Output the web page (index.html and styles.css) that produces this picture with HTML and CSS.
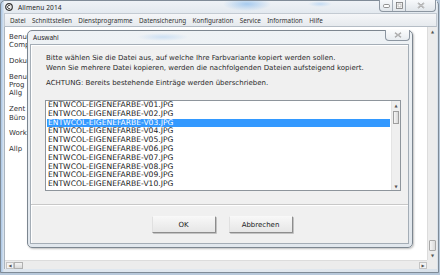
FILE: index.html
```html
<!DOCTYPE html>
<html lang="de">

<head>
    <meta charset="UTF-8">
    <title>Allmenu 2014</title>
    <link rel="stylesheet" href="styles.css">
</head>

<body>
    <div class="window">
        <div class="titlebar">
            <svg class="app-icon" width="8" height="8" viewBox="0 0 8 8">
                <circle cx="4" cy="4" r="3.3" fill="#fff" stroke="#333" stroke-width="1.2"/>
                <path d="M5.3 2.9 A1.6 1.6 0 1 0 5.3 5.1" fill="none" stroke="#333" stroke-width="0.9"/>
            </svg>
            <span class="title">Allmenu 2014</span>
            <div class="controls">
                <span class="ctl">
                    <svg width="7" height="4" viewBox="0 0 7 4"><rect x="0.5" y="0.5" width="6" height="3" rx="1.2" fill="#fff" stroke="#777" stroke-width="0.8"/></svg>
                </span>
                <span class="ctl">
                    <svg width="7" height="7" viewBox="0 0 7 7"><rect x="0.5" y="0.5" width="6" height="6" fill="#fff" stroke="#777" stroke-width="0.8"/><rect x="2" y="2" width="3" height="3" fill="none" stroke="#999" stroke-width="0.6"/></svg>
                </span>
                <span class="ctl ctl-close">
                    <svg width="8" height="7" viewBox="0 0 8 7"><path d="M1 1 L7 6 M7 1 L1 6" stroke="#888" stroke-width="1.4"/><path d="M1 1 L7 6 M7 1 L1 6" stroke="#fff" stroke-width="0.5"/></svg>
                </span>
            </div>
        </div>

        <div class="menubar">
            <span>Datei</span>
            <span>Schnittstellen</span>
            <span>Dienstprogramme</span>
            <span>Datensicherung</span>
            <span>Konfiguration</span>
            <span>Service</span>
            <span>Information</span>
            <span>Hilfe</span>
        </div>

        <div class="client">
            <!-- only the start of each label shows beside the dialog -->
            <div class="pane">
                <div class="group"><div>Benu</div><div>Comp</div></div>
                <div class="group"><div>Doku</div></div>
                <div class="group"><div>Benu</div><div>Prog</div><div>Allg</div></div>
                <div class="group"><div>Zent</div><div>Büro</div></div>
                <div class="group"><div>Work</div></div>
                <div class="group"><div>Allp</div></div>
            </div>
            <div class="vscroll">
                <span class="arrow">&#9650;</span>
                <span class="track"></span>
                <span class="thumb"></span>
                <span class="arrow">&#9660;</span>
            </div>
            <div class="hscroll">
                <span class="arrow">&#9664;</span>
                <span class="thumb"></span>
                <span class="track"></span>
                <span class="arrow">&#9654;</span>
            </div>
            <div class="grip"></div>
        </div>

        <!-- dialog window on top of the main window -->
        <div class="dialog">
            <div class="dialog-title">Auswahl</div>
            <span class="dialog-close">
                <svg width="8" height="6" viewBox="0 0 8 6"><path d="M1 0.8 L7 5.2 M7 0.8 L1 5.2" stroke="#888" stroke-width="1.3"/><path d="M1 0.8 L7 5.2 M7 0.8 L1 5.2" stroke="#fff" stroke-width="0.4"/></svg>
            </span>
            <div class="panel">
                <p class="message">Bitte wählen Sie die Datei aus, auf welche Ihre Farbvariante kopiert werden sollen.<br>Wenn Sie mehrere Datei kopieren, werden die nachfolgenden Dateien aufsteigend kopiert.</p>
                <p class="message warn">ACHTUNG: Bereits bestehende Einträge werden überschrieben.</p>
                <div class="listbox">
                    <div class="items" id="items"></div>
                    <div class="lscroll">
                        <span class="arrow">&#9650;</span>
                        <span class="thumb"></span>
                        <span class="track"></span>
                        <span class="arrow">&#9660;</span>
                    </div>
                </div>
                <div class="footer">
                    <button>OK</button>
                    <button>Abbrechen</button>
                </div>
            </div>
        </div>
    </div>

    <script>
        const items = document.getElementById('items');
        for (let i = 1; i <= 10; i++) {
            const row = document.createElement('div');
            row.className = 'item' + (i === 3 ? ' selected' : '');
            row.textContent = 'ENTWCOL-EIGENEFARBE-V' + String(i).padStart(2, '0') + '.JPG';
            items.appendChild(row);
        }
    </script>
</body>

</html>
```

FILE: styles.css
```css
* {
    box-sizing: border-box;
}

body {
    margin: 0;
    width: 440px;
    height: 275px;
    overflow: hidden;
    background: #b7c8da;
    font-family: "DejaVu Sans", Verdana, sans-serif;
}

.window {
    position: relative;
    width: 439px;
    height: 273px;
    display: flex;
    flex-direction: column;
    padding: 0 1px 3px 3px;
    border: 1px solid #7f8b97;
    border-radius: 5px 5px 0 0;
    background: linear-gradient(90deg, #a9c6e6 0, #dde6ef 3px, #e3e9ef 60%, #d9e2eb 100%);
}

.titlebar {
    position: relative;
    height: 12px;
    display: flex;
    align-items: center;
    background: radial-gradient(ellipse 24px 7px at 243px 3px, #a7cbef, rgba(167, 203, 239, 0)),
        radial-gradient(ellipse 12px 3px at 316px 3px, #c3dbf3, rgba(195, 219, 243, 0)),
        linear-gradient(#eef2f6, #e3e9ef);
}

.app-icon {
    margin-left: 1px;
}

.title {
    margin-left: 5px;
    font-family: "Noto Sans", sans-serif;
    font-size: 6.6px;
    color: #1e1e1e;
    letter-spacing: 0.1px;
}

.controls {
    position: absolute;
    top: -1px;
    right: 1px;
    display: flex;
    height: 12px;
    border: 1px solid #8c96a1;
    border-top: none;
    border-radius: 0 0 4px 4px;
    overflow: hidden;
    background: linear-gradient(#f7f9fb, #e1e6eb);
}

.ctl {
    width: 13px;
    display: flex;
    align-items: center;
    justify-content: center;
    border-right: 1px solid #a3acb6;
}

.ctl-close {
    width: 29px;
    border-right: none;
}

.menubar {
    height: 14px;
    display: flex;
    align-items: center;
    padding-left: 1.8px;
    background: linear-gradient(#f5f6f8, #e6eaee);
    border: 1px solid #c3cad2;
    border-bottom-color: #b5bdc6;
    font-family: "Noto Sans", sans-serif;
    font-size: 6.3px;
    color: #333;
}

.menubar span {
    padding: 0 3.2px;
}

.client {
    flex: 1;
    display: grid;
    grid-template-columns: 1fr 10px;
    grid-template-rows: 1fr 9px;
    background: #fff;
    border-left: 1px solid #aab4be;
    overflow: hidden;
}

.pane {
    padding: 6px 0 0 4px;
    white-space: nowrap;
    font-size: 7px;
    line-height: 8.3px;
    color: #333;
}

.group {
    margin-bottom: 7.5px;
}

.vscroll,
.hscroll,
.lscroll {
    display: flex;
    background: #ececec;
    font-size: 4px;
    color: #555;
}

.vscroll,
.lscroll {
    flex-direction: column;
}

.vscroll {
    border-left: 1px solid #dcdcdc;
}

.arrow {
    display: flex;
    align-items: center;
    justify-content: center;
    flex: none;
    width: 9px;
    height: 9px;
}

.track {
    flex: 1;
}

.vscroll .thumb {
    height: 11px;
    margin: 0 1px;
    border: 1px solid #a8a8a8;
    border-radius: 1px;
    background: linear-gradient(90deg, #f4f4f4, #dadada);
}

.hscroll {
    align-items: center;
    border-top: 1px solid #dcdcdc;
    padding-left: 1px;
}

.hscroll .arrow {
    border: 1px solid #c4c4c4;
    width: 8px;
    height: 7px;
    background: #f3f3f3;
}

.hscroll .thumb {
    width: 9px;
    height: 7px;
    border: 1px solid #b0b0b0;
    background: linear-gradient(#f4f4f4, #dadada);
}

.grip {
    background: #ececec;
}

/* dialog */
.dialog {
    position: absolute;
    left: 26px;
    top: 29px;
    width: 386px;
    height: 218px;
    display: flex;
    flex-direction: column;
    padding: 0 3px 3px 2px;
    border: 1px solid #7c8690;
    border-radius: 5px;
    background: radial-gradient(ellipse 26px 4px at 135px 6px, #cde0f3, rgba(205, 224, 243, 0)),
        linear-gradient(#eef2f5, #e1e7ed);
    box-shadow: 1px 1px 2px rgba(0, 0, 0, 0.25);
}

.dialog-title {
    height: 13px;
    padding: 2px 0 0 3px;
    font-family: "Noto Sans", sans-serif;
    font-size: 6.5px;
    color: #1e1e1e;
}

.dialog-close {
    position: absolute;
    top: -1px;
    right: 2px;
    width: 25px;
    height: 11px;
    display: flex;
    align-items: center;
    justify-content: center;
    border: 1px solid #8c96a1;
    border-top: none;
    border-radius: 0 0 4px 4px;
    background: linear-gradient(#fafbfc, #e8ecf0);
}

.panel {
    flex: 1;
    display: flex;
    flex-direction: column;
    background: #f0f0f0;
    border: 1px solid #a4adb6;
    box-shadow: inset 1px 1px 0 #fff;
}

.message {
    margin: 0;
    padding: 8px 0 0 15px;
    font-size: 7px;
    line-height: 10px;
    color: #2a2a2a;
}

.warn {
    padding-top: 5px;
}

.listbox {
    display: flex;
    height: 91px;
    margin: 12px 0 0 14px;
    width: 356px;
    border: 1px solid #8e959c;
    background: #fff;
    overflow: hidden;
}

.items {
    flex: 1;
    padding: 0 1px 0 1px;
}

.item {
    height: 8.8px;
    padding-left: 1px;
    font-size: 7.6px;
    line-height: 8.8px;
    color: #222;
    white-space: nowrap;
}

.selected {
    background: #3399ff;
    color: #fff;
}

.lscroll {
    width: 9px;
    border-left: 1px solid #e4e4e4;
    background: #efefef;
}

.lscroll .arrow {
    width: 8px;
    height: 8px;
}

.lscroll .thumb {
    height: 13px;
    margin: 2px 1px 0;
    border: 1px solid #9e9e9e;
    background: linear-gradient(90deg, #f6f6f6, #d8d8d8);
}

.footer {
    flex: 1;
    display: flex;
    justify-content: center;
    gap: 13px;
    margin-top: 13px;
    padding: 11px 0 0 5px;
    border-top: 1px solid #c8c8c8;
    box-shadow: inset 0 1px 0 #fff;
}

button {
    width: 64px;
    height: 17px;
    padding: 0;
    font-family: "DejaVu Sans", Verdana, sans-serif;
    font-size: 7px;
    color: #222;
    background: linear-gradient(#f7f7f7, #e6e6e6);
    border: 1px solid;
    border-color: #f8f8f8 #8d8d8d #8d8d8d #e0e0e0;
    box-shadow: 1px 1px 0 #c2c2c2;
    border-radius: 1px;
}
```
